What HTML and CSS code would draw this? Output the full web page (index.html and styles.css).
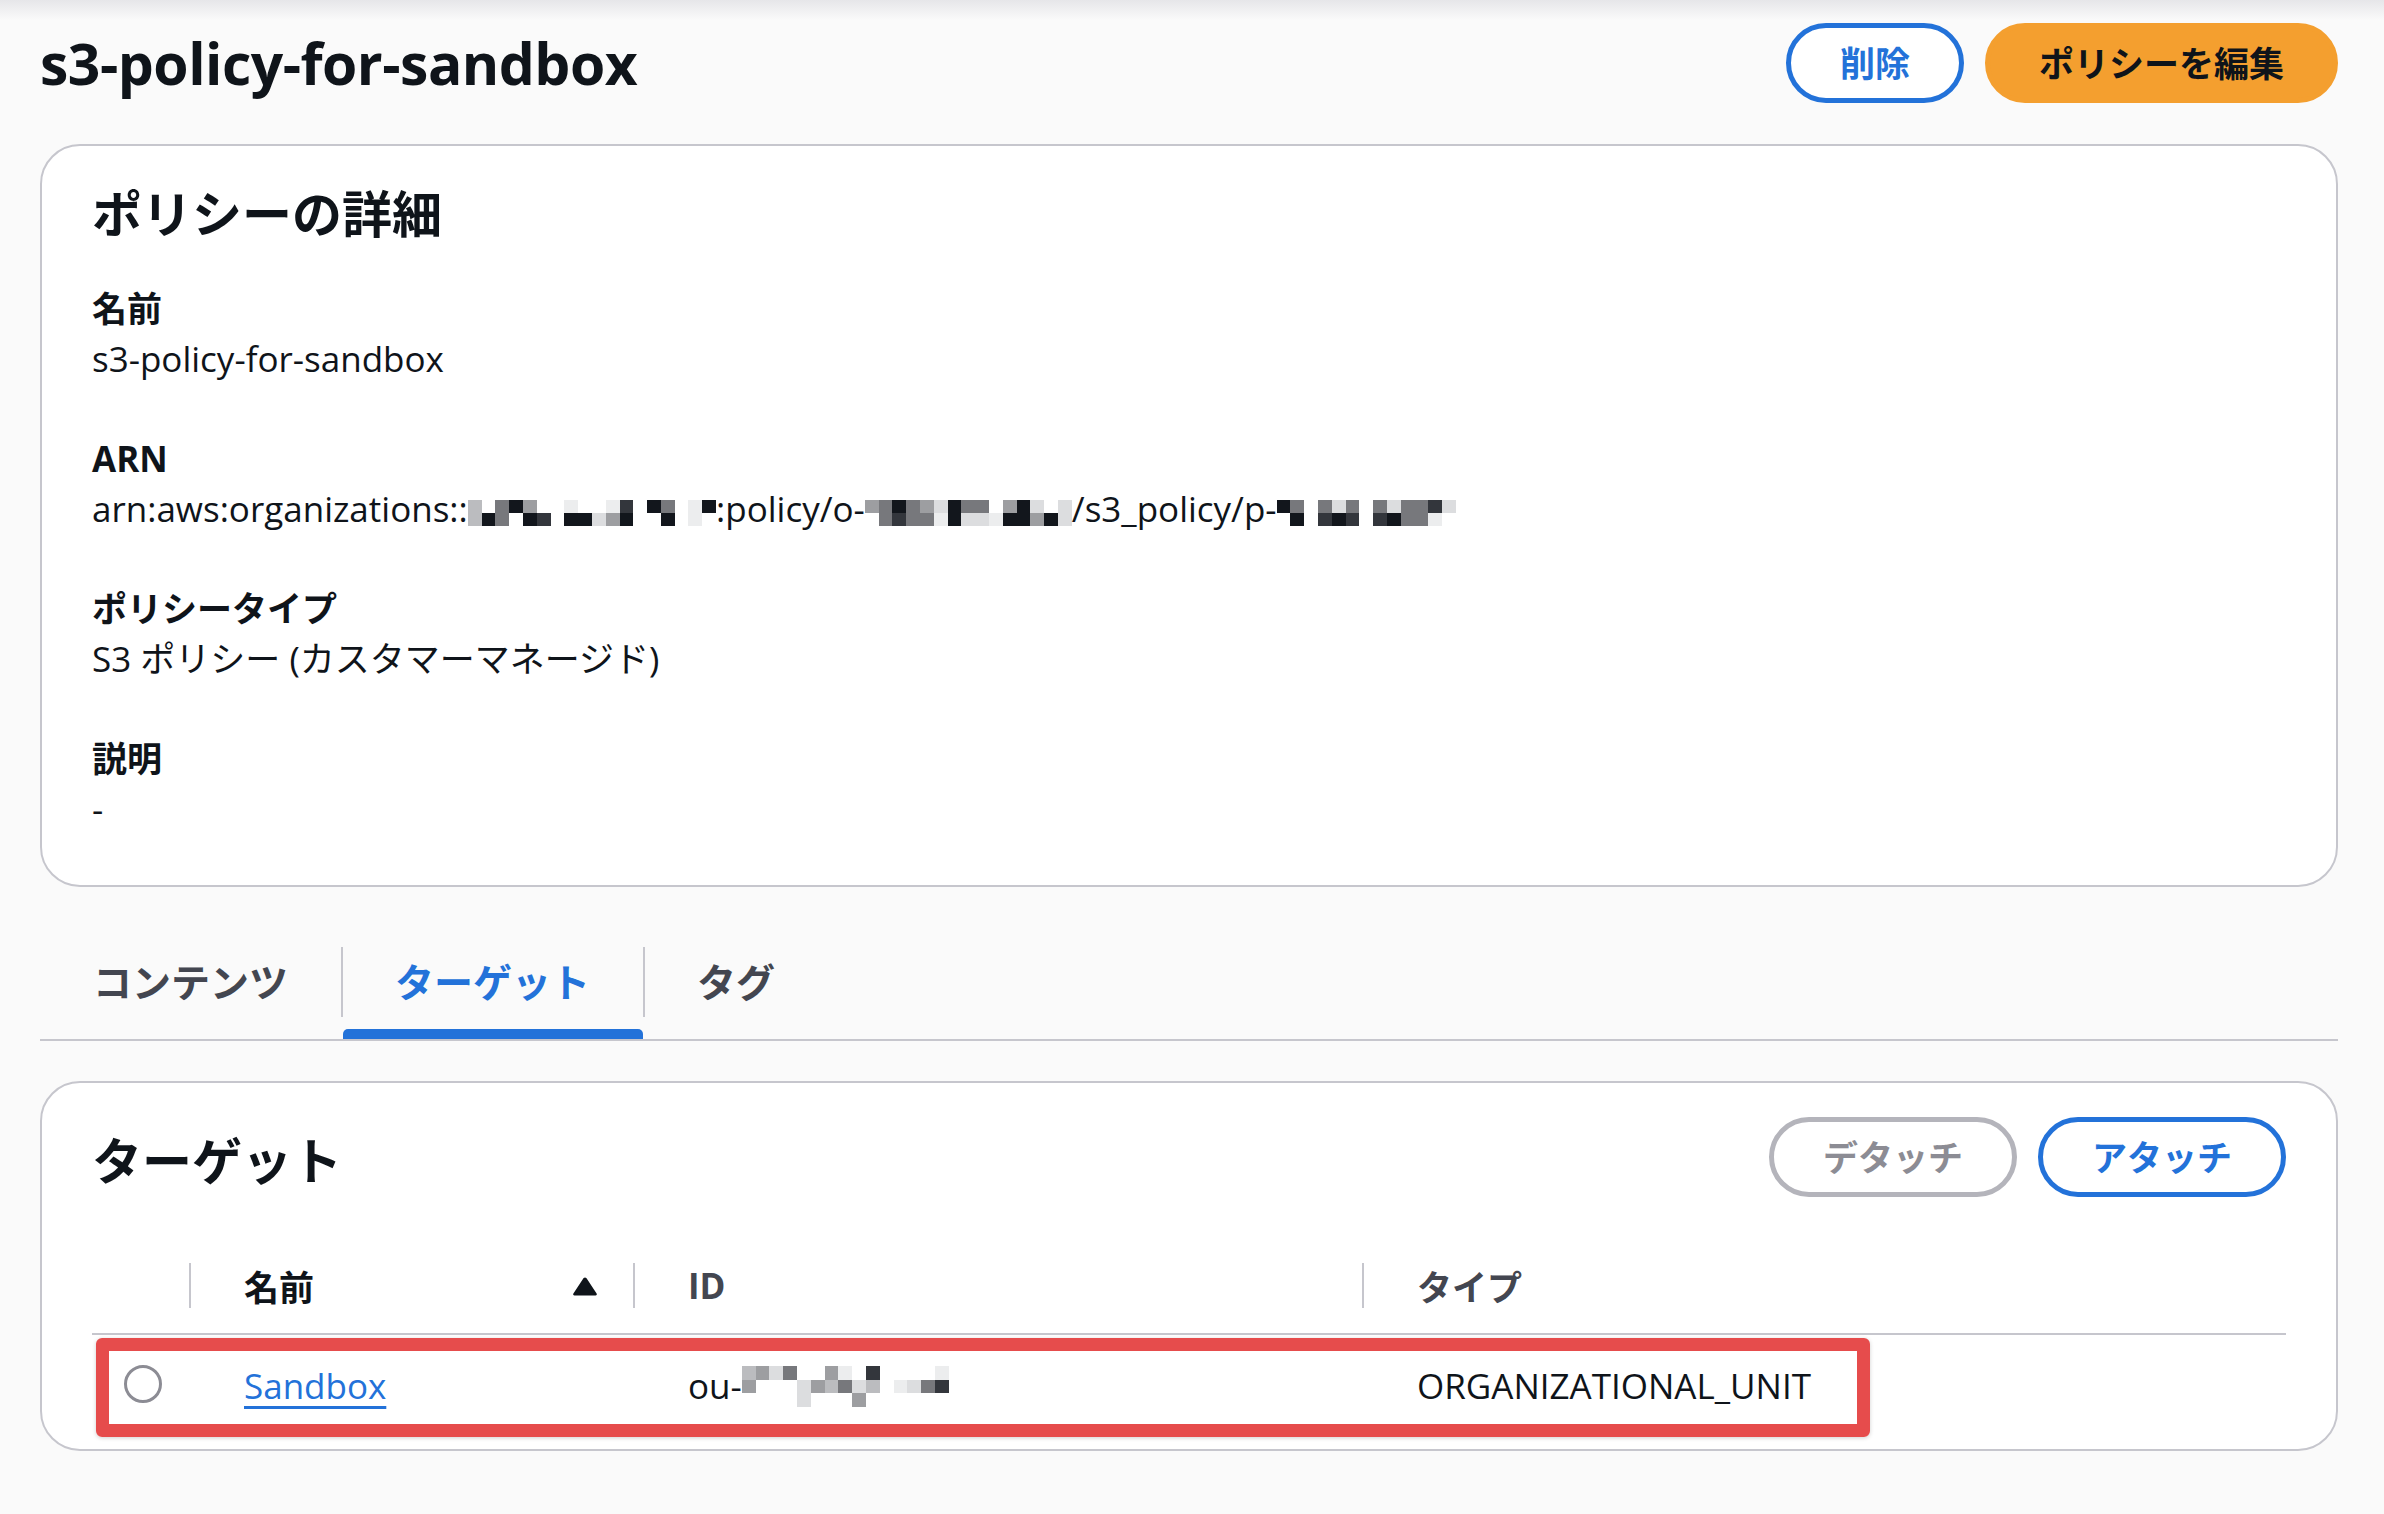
FILE: index.html
```html
<!DOCTYPE html>
<html lang="ja">
<head>
<meta charset="utf-8">
<title>s3-policy-for-sandbox</title>
<link rel="stylesheet" href="styles.css">
</head>
<body>
<div class="topshade"></div>
<div class="page">
  <header class="page-header">
    <h1 class="title">s3-policy-for-sandbox</h1>
    <div class="actions">
      <button class="btn">削除</button>
      <button class="btn btn-primary">ポリシーを編集</button>
    </div>
  </header>

  <section class="card details">
    <h2 class="card-title">ポリシーの詳細</h2>
    <div class="kv-list">
      <div class="kv">
        <div class="kv-label">名前</div>
        <div class="kv-value">s3-policy-for-sandbox</div>
      </div>
      <div class="kv">
        <div class="kv-label">ARN</div>
        <div class="kv-value">arn:aws:organizations::<span class="mosaic m2"><i class="g5"></i><i class="g5"></i><i></i><i class="g1"></i><i class="g3"></i><i class="g3"></i><i class="g1"></i><i></i><i class="g4"></i><i class="g1"></i><i></i><i class="g2"></i><i></i><i></i><i class="g7"></i><i class="g1"></i><i></i><i class="g1"></i><i></i><i class="g6"></i><i class="g7"></i><i class="g4"></i><i class="g2"></i><i class="g1"></i><i></i><i></i><i class="g1"></i><i></i><i class="g3"></i><i class="g1"></i><i></i><i></i><i class="g7"></i><i class="g7"></i><i class="g1"></i><i></i></span>:policy/o-<span class="mosaic m2"><i class="g4"></i><i></i><i class="g3"></i><i class="g3"></i><i class="g1"></i><i class="g2"></i><i class="g3"></i><i class="g3"></i><i class="g4"></i><i class="g3"></i><i class="g6"></i><i class="g7"></i><i class="g1"></i><i class="g1"></i><i class="g3"></i><i class="g6"></i><i class="g3"></i><i class="g6"></i><i></i><i class="g7"></i><i class="g4"></i><i class="g1"></i><i class="g1"></i><i class="g1"></i><i class="g6"></i><i class="g4"></i><i></i><i class="g1"></i><i class="g6"></i><i class="g6"></i></span>/s3_policy/p-<span class="mosaic m2"><i class="g1"></i><i></i><i class="g3"></i><i class="g1"></i><i></i><i></i><i class="g3"></i><i class="g2"></i><i class="g6"></i><i class="g1"></i><i class="g3"></i><i class="g2"></i><i></i><i></i><i class="g3"></i><i class="g2"></i><i class="g6"></i><i class="g1"></i><i class="g3"></i><i class="g3"></i><i class="g3"></i><i class="g3"></i><i class="g2"></i><i class="g7"></i><i class="g6"></i><i></i></span></div>
      </div>
      <div class="kv">
        <div class="kv-label">ポリシータイプ</div>
        <div class="kv-value">S3 ポリシー (カスタマーマネージド)</div>
      </div>
      <div class="kv">
        <div class="kv-label">説明</div>
        <div class="kv-value">-</div>
      </div>
    </div>
  </section>

  <nav class="tabs">
    <div class="tab"><div class="tab-label">コンテンツ</div><div class="tab-bar"></div></div>
    <div class="tab active"><div class="tab-label">ターゲット</div><div class="tab-bar"></div></div>
    <div class="tab"><div class="tab-label">タグ</div><div class="tab-bar"></div></div>
  </nav>

  <section class="card targets">
    <div class="targets-header">
      <h2 class="card-title targets-title">ターゲット</h2>
      <div class="actions">
        <button class="btn btn-disabled">デタッチ</button>
        <button class="btn">アタッチ</button>
      </div>
    </div>
    <div class="table">
      <div class="tr thead">
        <div class="th"></div>
        <div class="th"><div class="th-inner th-sorted"><span>名前</span><svg class="sort-icon" width="26" height="20" viewBox="0 0 26 20"><path d="M13 1.5 C14 1.5 14.6 2.2 15.2 3.3 L24.6 17.6 C25.2 18.6 24.7 19.5 23.5 19.5 H2.5 C1.3 19.5 0.8 18.6 1.4 17.6 L10.8 3.3 C11.4 2.2 12 1.5 13 1.5 Z" fill="#0f141a"/></svg></div></div>
        <div class="th"><div class="th-inner">ID</div></div>
        <div class="th"><div class="th-inner">タイプ</div></div>
      </div>
      <div class="tr trow">
        <div class="td td-select"><span class="radio"></span></div>
        <div class="td"><a class="link" href="#">Sandbox</a></div>
        <div class="td">ou-<span class="mosaic m3"><i class="g5"></i><i class="g4"></i><i></i><i class="g4"></i><i></i><i></i><i class="g6"></i><i></i><i></i><i class="g3"></i><i></i><i></i><i></i><i class="g6"></i><i class="g6"></i><i></i><i class="g4"></i><i></i><i class="g4"></i><i class="g5"></i><i></i><i class="g7"></i><i class="g3"></i><i></i><i></i><i class="g6"></i><i class="g4"></i><i class="g2"></i><i class="g5"></i><i></i><i></i><i></i><i></i><i></i><i class="g7"></i><i></i><i></i><i class="g6"></i><i></i><i></i><i class="g3"></i><i></i><i class="g7"></i><i class="g2"></i><i></i></span></div>
        <div class="td">ORGANIZATIONAL_UNIT</div>
        <div class="annot"></div>
      </div>
    </div>
  </section>
</div>
</body>
</html>
```

FILE: styles.css
```css
* {
  box-sizing: border-box;
}

body {
  margin: 0;
  background: #fafafa;
  color: #0f141a;
  font-family: "Open Sans", "Noto Sans CJK JP", sans-serif;
}

.topshade {
  position: absolute;
  top: 0;
  left: 0;
  right: 0;
  height: 20px;
  background: linear-gradient(#e6e6e9, rgba(250, 250, 250, 0));
}

.page {
  padding: 23px 46px 0 40px;
}

.page-header {
  display: flex;
  justify-content: space-between;
  align-items: center;
  height: 80px;
}

.title {
  margin: 0;
  font-size: 57px;
  line-height: 80px;
  font-weight: 700;
  letter-spacing: -0.5px;
}

.actions {
  display: flex;
  gap: 21px;
}

.btn {
  height: 80px;
  padding: 0 49px;
  border: 5px solid #2372d9;
  border-radius: 40px;
  background: #fff;
  color: #2372d9;
  font-family: "Open Sans", "Noto Sans CJK JP", sans-serif;
  font-size: 35px;
  font-weight: 700;
  line-height: 1;
  display: flex;
  align-items: center;
}

.btn-primary {
  background: #f49f2f;
  border-color: #f49f2f;
  color: #0f141a;
}

.btn-disabled {
  border-color: #b4b4bb;
  color: #8c8c94;
}

.card {
  background: #fff;
  border: 2px solid #c6c6cd;
  border-radius: 40px;
}

.details {
  margin-top: 41px;
  padding: 38px 50px 51px;
}

.card-title {
  margin: 0;
  height: 60px;
  font-size: 50px;
  line-height: 60px;
  font-weight: 700;
}

.kv-list {
  margin-top: 40px;
  display: flex;
  flex-direction: column;
  gap: 50px;
}

.kv-label {
  height: 50px;
  font-size: 35px;
  line-height: 50px;
  font-weight: 700;
}

.kv-value {
  height: 50px;
  font-size: 35px;
  line-height: 50px;
  white-space: nowrap;
}

.mosaic {
  display: inline-grid;
  grid-auto-flow: column;
  grid-auto-columns: 13.8px;
  vertical-align: middle;
}

.mosaic.m2 {
  grid-template-rows: repeat(2, 13px);
}

.mosaic.m3 {
  grid-template-rows: repeat(3, 13.7px);
  margin-top: -6px;
}

.mosaic i {
  display: block;
}

.g1 { background: #12161c; }
.g2 { background: #33363c; }
.g3 { background: #77787c; }
.g4 { background: #9d9ea1; }
.g5 { background: #bbbcbf; }
.g6 { background: #dcdddf; }
.g7 { background: #ecedee; }

.tabs {
  display: flex;
  margin-top: 60px;
  border-bottom: 2px solid #c6c6cd;
}

.tab {
  display: flex;
  flex-direction: column;
}

.tab-label {
  height: 70px;
  padding: 0 53px;
  font-size: 39px;
  line-height: 70px;
  font-weight: 700;
  color: #434650;
}

.tab + .tab .tab-label {
  border-left: 2px solid #c6c6cd;
  padding-left: 52px;
}

.tab-bar {
  height: 10px;
  margin-top: 12px;
  border-radius: 5px 5px 0 0;
}

.tab.active .tab-label {
  color: #2372d9;
}

.tab.active .tab-bar {
  background: #2372d9;
  margin-left: 2px;
}

.targets {
  margin-top: 40px;
  padding: 0 50px 11px;
}

.targets-header {
  display: flex;
  justify-content: space-between;
  align-items: flex-start;
  padding-top: 34px;
}

.targets-title {
  margin-top: 14px;
}

.table {
  margin-top: 43px;
}

.tr {
  display: grid;
  grid-template-columns: 97px 444px 729px 1fr;
}

.thead {
  border-bottom: 2px solid #c6c6cd;
}

.th {
  height: 93px;
  padding: 23px 0 25px;
}

.th-inner {
  height: 45px;
  border-left: 2px solid #c6c6cd;
  padding: 0 35px 0 53px;
  display: flex;
  align-items: center;
  justify-content: space-between;
  font-size: 35px;
  font-weight: 700;
  color: #434650;
}

.th-sorted {
  color: #0f141a;
}

.trow {
  position: relative;
}

.td {
  height: 103px;
  padding: 26px 0 27px 55px;
  font-size: 35px;
  line-height: 50px;
  white-space: nowrap;
}

.td-select {
  padding: 0 0 5px 32px;
  display: flex;
  align-items: center;
}

.radio {
  width: 38px;
  height: 38px;
  border: 3px solid #8c8c94;
  border-radius: 50%;
  background: #fff;
}

.link {
  color: #2372d9;
  text-decoration: underline;
  text-decoration-thickness: 3px;
  text-underline-offset: 7px;
}

.annot {
  position: absolute;
  left: 4px;
  top: 3px;
  width: 1774px;
  height: 99px;
  border: 13px solid #e64c4c;
  border-radius: 6px;
  box-shadow: 0 1px 4px rgba(0, 0, 0, 0.18);
  pointer-events: none;
}
```
